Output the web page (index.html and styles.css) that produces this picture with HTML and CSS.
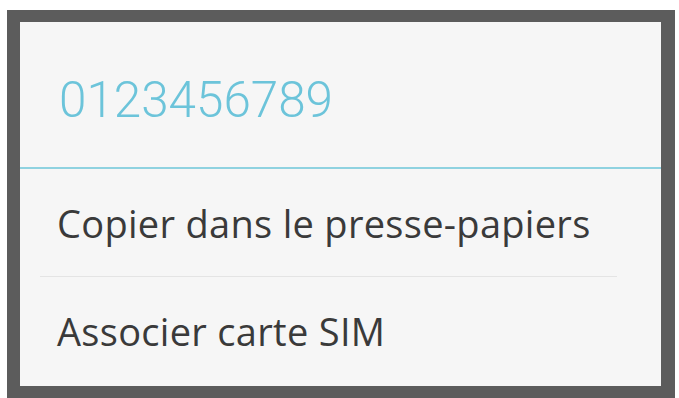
FILE: index.html
```html
<!DOCTYPE html>
<html lang="fr">
<head>
<meta charset="utf-8">
<link rel="stylesheet" href="styles.css">
</head>
<body>
<div class="frame">
  <div class="dialog">
    <div class="title">0123456789</div>
    <div class="title-rule"></div>
    <div class="item">Copier dans le presse-papiers</div>
    <div class="divider"></div>
    <div class="item">Associer carte SIM</div>
  </div>
</div>
</body>
</html>
```

FILE: styles.css
```css
html, body {
  margin: 0;
  padding: 0;
  background: #ffffff;
}
body {
  padding: 10px 0 0 7px;
  font-family: Roboto, "Noto Sans", sans-serif;
}
.frame {
  box-sizing: border-box;
  width: 668px;
  height: 388px;
  border-style: solid;
  border-color: #5c5c5c;
  border-width: 12px 14px 12px 13px;
  background: #f6f6f6;
}
.dialog {
  display: flex;
  flex-direction: column;
  height: 100%;
}
.title {
  height: 145px;
  box-sizing: border-box;
  padding: 50px 0 0 39px;
  font-size: 49.4px;
  font-weight: 300;
  line-height: 56px;
  color: #6cc4da;
}
.title-rule {
  height: 2px;
  background: #8fd2e0;
}
.item {
  height: 107px;
  display: flex;
  align-items: center;
  padding-left: 37px;
  font-family: "Open Sans", "Noto Sans", sans-serif;
  font-size: 38px;
  letter-spacing: 0.3px;
  color: #3a3a3a;
}
.divider {
  height: 1px;
  margin: 0 44px 0 20px;
  background: #e4e4e4;
}
```
